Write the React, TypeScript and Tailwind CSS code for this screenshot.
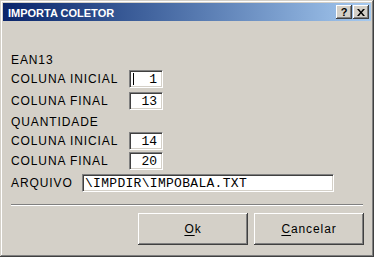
import React from 'react';

const sans = "font-['Liberation_Sans',Arial,sans-serif]";
const mono = "font-['Liberation_Mono','Courier_New',monospace]";

const sunken =
  'bg-white border-t border-l border-[#808080] border-b border-r border-b-white border-r-white shadow-[inset_1px_1px_0_#404040,inset_-1px_-1px_0_#d4d0c8]';

const raised =
  'bg-[#d4d0c8] shadow-[inset_-1px_-1px_0_#404040,inset_1px_1px_0_#ffffff,inset_-2px_-2px_0_#808080,inset_2px_2px_0_#d4d0c8]';

type Row = { label: string; value?: string; caret?: boolean; mt: string };

const rows: Row[] = [
  { label: 'EAN13', mt: 'mt-0' },
  { label: 'COLUNA INICIAL', value: '1', caret: true, mt: 'mt-[1px]' },
  { label: 'COLUNA FINAL', value: '13', mt: 'mt-[4px]' },
  { label: 'QUANTIDADE', mt: 'mt-[3px]' },
  { label: 'COLUNA INICIAL', value: '14', mt: 'mt-[1px]' },
  { label: 'COLUNA FINAL', value: '20', mt: 'mt-[2px]' },
];

const CaptionButton: React.FC<{ children: React.ReactNode }> = ({ children }) => (
  <div className={`w-[16px] h-[14px] flex items-center justify-center ${raised}`}>{children}</div>
);

const App: React.FC = () => {
  return (
    <div
      className={`w-[374px] h-[257px] bg-[#d4d0c8] p-[3px] flex flex-col shadow-[inset_-1px_-1px_0_#404040,inset_1px_1px_0_#d4d0c8,inset_-2px_-2px_0_#808080,inset_2px_2px_0_#ffffff] ${sans}`}
    >
      <div className="h-[18px] flex items-center bg-gradient-to-r from-[#0a246a] to-[#a6caf0] pl-[5px] pr-[2px]">
        <span className="text-white font-bold text-[11px] leading-[18px] pt-[1px] flex-1">IMPORTA COLETOR</span>
        <div className="flex gap-[1px]">
          <CaptionButton>
            <span className="text-black font-bold text-[11px] leading-none pt-[1px]">?</span>
          </CaptionButton>
          <CaptionButton>
            <svg width="8" height="7" viewBox="0 0 8 7">
              <path d="M0 0h2l2 2.5L6 0h2L5 3.5 8 7H6L4 4.5 2 7H0l3-3.5z" fill="#000" />
            </svg>
          </CaptionButton>
        </div>
      </div>

      <div className="flex-1 flex flex-col pt-[30px] pl-[8px] pr-[8px] text-[12px] tracking-[0.9px] text-black">
        {rows.map((r, i) => (
          <div key={i} className={`h-[18px] flex items-center ${r.mt}`}>
            <span className="w-[118px] leading-[18px]">{r.label}</span>
            {r.value && (
              <div className={`relative w-[34px] h-[18px] flex items-center justify-end pr-[5px] ${sunken}`}>
                {r.caret && <div className="absolute left-[3px] top-[2px] w-[1px] h-[12px] bg-black" />}
                <span className={`${mono} text-[13px] tracking-normal leading-none`}>{r.value}</span>
              </div>
            )}
          </div>
        ))}
        <div className="h-[18px] flex items-center mt-[4px]">
          <span className="w-[71px] leading-[18px]">ARQUIVO</span>
          <div className={`w-[252px] h-[18px] flex items-center pl-[2px] ${sunken}`}>
            <span className={`${mono} text-[13px] tracking-[0.3px] leading-none`}>\IMPDIR\IMPOBALA.TXT</span>
          </div>
        </div>

        <div className="mt-[12px] h-[2px] border-t border-[#808080] border-b border-b-white" />

        <div className="flex justify-end gap-[6px] mt-[7px] mr-[-1px]">
          <div className={`w-[110px] h-[32px] flex items-center justify-center ${raised}`}>
            <span>
              <span className="underline underline-offset-2">O</span>k
            </span>
          </div>
          <div className={`w-[110px] h-[32px] flex items-center justify-center ${raised}`}>
            <span>
              <span className="underline underline-offset-2">C</span>ancelar
            </span>
          </div>
        </div>
      </div>
    </div>
  );
};

export default App;
